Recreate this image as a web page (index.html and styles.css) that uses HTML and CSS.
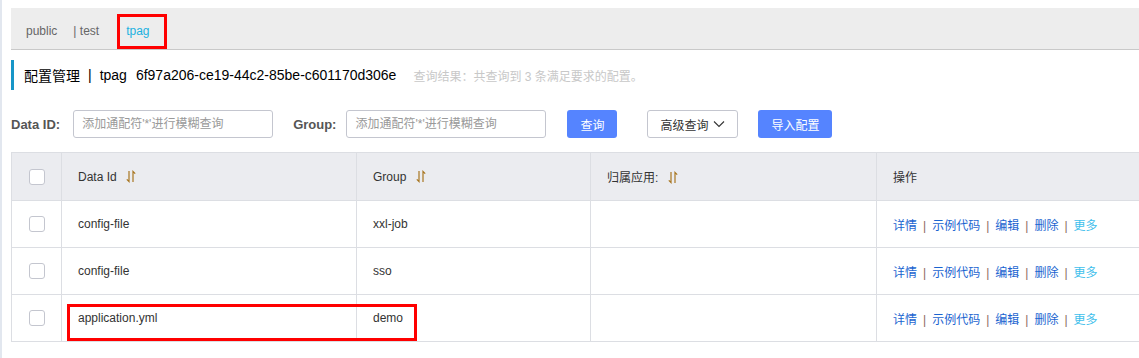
FILE: index.html
```html
<!DOCTYPE html>
<html lang="zh-CN">
<head>
  <meta charset="UTF-8">
  <title>配置管理</title>
  <link rel="stylesheet" href="styles.css">
</head>
<body>

<div class="page">
  <div class="tabs">
    <span class="tab">public</span>
    <span class="tab">| test</span>
    <span class="tab active">tpag</span>
  </div>

  <div class="title">
    <span>配置管理</span>
    <span class="sep">|</span>
    <span>tpag</span>
    <span class="ns-id">6f97a206-ce19-44c2-85be-c601170d306e</span>
    <span class="summary">查询结果：共查询到 3 条满足要求的配置。</span>
  </div>

  <form class="search">
    <label>Data ID:</label>
    <input type="text" placeholder="添加通配符'*'进行模糊查询">
    <label class="gap">Group:</label>
    <input type="text" placeholder="添加通配符'*'进行模糊查询">
    <button type="button" class="btn primary">查询</button>
    <button type="button" class="btn normal">高级查询
      <svg width="12" height="8" viewBox="0 0 12 8"><path d="M1 1.5 L6 6.5 L11 1.5" fill="none" stroke="#333" stroke-width="1.1"/></svg>
    </button>
    <button type="button" class="btn primary wide">导入配置</button>
  </form>

  <table class="grid">
    <colgroup>
      <col style="width:50px">
      <col style="width:295px">
      <col style="width:234px">
      <col style="width:286px">
      <col>
    </colgroup>
    <thead>
      <tr>
        <th class="check"><span class="box"></span></th>
        <th>Data Id <svg class="sort" width="10" height="13" viewBox="0 0 10 13"><path d="M3 1 V11.5 L0.8 9.3 M7 12 V1.5 L9.2 3.7" fill="none" stroke="#a87620" stroke-width="1.2"/></svg></th>
        <th>Group <svg class="sort" width="10" height="13" viewBox="0 0 10 13"><path d="M3 1 V11.5 L0.8 9.3 M7 12 V1.5 L9.2 3.7" fill="none" stroke="#a87620" stroke-width="1.2"/></svg></th>
        <th>归属应用: <svg class="sort" width="10" height="13" viewBox="0 0 10 13"><path d="M3 1 V11.5 L0.8 9.3 M7 12 V1.5 L9.2 3.7" fill="none" stroke="#a87620" stroke-width="1.2"/></svg></th>
        <th>操作</th>
      </tr>
    </thead>
    <tbody>
      <tr>
        <td class="check"><span class="box"></span></td>
        <td>config-file</td>
        <td>xxl-job</td>
        <td></td>
        <td class="ops"><a>详情</a><i>|</i><a>示例代码</a><i>|</i><a>编辑</a><i>|</i><a>删除</a><i>|</i><a class="more">更多</a></td>
      </tr>
      <tr>
        <td class="check"><span class="box"></span></td>
        <td>config-file</td>
        <td>sso</td>
        <td></td>
        <td class="ops"><a>详情</a><i>|</i><a>示例代码</a><i>|</i><a>编辑</a><i>|</i><a>删除</a><i>|</i><a class="more">更多</a></td>
      </tr>
      <tr>
        <td class="check"><span class="box"></span></td>
        <td>application.yml</td>
        <td>demo</td>
        <td></td>
        <td class="ops"><a>详情</a><i>|</i><a>示例代码</a><i>|</i><a>编辑</a><i>|</i><a>删除</a><i>|</i><a class="more">更多</a></td>
      </tr>
    </tbody>
  </table>

  <!-- red annotation boxes drawn over the screenshot -->
  <div class="mark mark-tab"></div>
  <div class="mark mark-row"></div>
</div>

</body>
</html>
```

FILE: styles.css
```css
* {
  margin: 0;
  padding: 0;
  box-sizing: border-box;
}

body {
  font-family: "Liberation Sans", "Noto Sans CJK SC", sans-serif;
  font-size: 12px;
  color: #333;
  background: #fff;
  overflow: hidden;
}

.page {
  position: relative;
  min-height: 100vh;
  border-left: 2px solid #e2e7ef;
  padding: 8px 0 0 9px;
}

.tabs {
  display: flex;
  align-items: center;
  height: 42px;
  padding: 4px 0 0 15px;
  background: #ededed;
  border-bottom: 1px solid #c9c9c9;
  color: #666;
}

.tab {
  margin-right: 16px;
}

.tab.active {
  margin-left: 11px;
  color: #1bb1e0;
}

.title {
  display: flex;
  align-items: center;
  height: 30px;
  margin-top: 10px;
  padding-left: 10px;
  border-left: 3px solid #1796c8;
  font-size: 14px;
  color: #000;
}

.title .sep {
  margin: 0 8px;
}

.title .ns-id {
  margin-left: 9px;
}

.title .summary {
  margin-left: 17px;
  font-size: 12px;
  color: #c8c8c8;
}

.search {
  display: flex;
  align-items: center;
  margin-top: 20px;
  height: 28px;
}

.search label {
  font-size: 13px;
  font-weight: bold;
  color: #555;
  margin-right: 13px;
}

.search label.gap {
  margin-left: 20px;
  margin-right: 10px;
}

.search input {
  width: 200px;
  height: 28px;
  padding: 0 8px;
  border: 1px solid #c4c6cf;
  border-radius: 3px;
  font-family: inherit;
  font-size: 12px;
  color: #333;
  outline: none;
}

.search input::placeholder {
  color: #999;
}

.btn {
  height: 28px;
  border-radius: 3px;
  font-family: inherit;
  font-size: 12px;
  cursor: pointer;
}

.btn.primary {
  width: 50px;
  margin-left: 21px;
  background: #5584ff;
  border: none;
  color: #fff;
}

.btn.primary.wide {
  width: 74px;
  margin-left: 20px;
}

.btn.normal {
  display: flex;
  align-items: center;
  justify-content: center;
  gap: 5px;
  width: 91px;
  margin-left: 30px;
  background: #fff;
  border: 1px solid #c4c6cf;
  color: #333;
}

.grid {
  margin-top: 14px;
  width: 1200px;
  border-collapse: collapse;
  table-layout: fixed;
}

.grid th,
.grid td {
  padding: 0 16px;
  border: 1px solid #dcdee3;
  text-align: left;
  font-weight: normal;
  color: #333;
}

.grid thead th {
  height: 48px;
  background: #ebecf0;
}

.grid td {
  height: 47px;
}

.grid .check {
  padding: 0;
  text-align: center;
}

.box {
  display: inline-block;
  width: 16px;
  height: 16px;
  border: 1px solid #c4c6cf;
  border-radius: 3px;
  background: #fff;
  vertical-align: middle;
}

.sort {
  vertical-align: -2px;
  margin-left: 6px;
}

.ops a {
  color: #1a64d0;
}

.ops a.more {
  color: #3fc0ec;
}

.ops i {
  font-style: normal;
  color: #8a6a60;
  margin: 0 6px;
}

.mark {
  position: absolute;
  border: 3px solid #f00;
}

.mark-tab {
  left: 115px;
  top: 14px;
  width: 50px;
  height: 35px;
}

.mark-row {
  left: 65px;
  top: 304px;
  width: 350px;
  height: 37px;
}
```
